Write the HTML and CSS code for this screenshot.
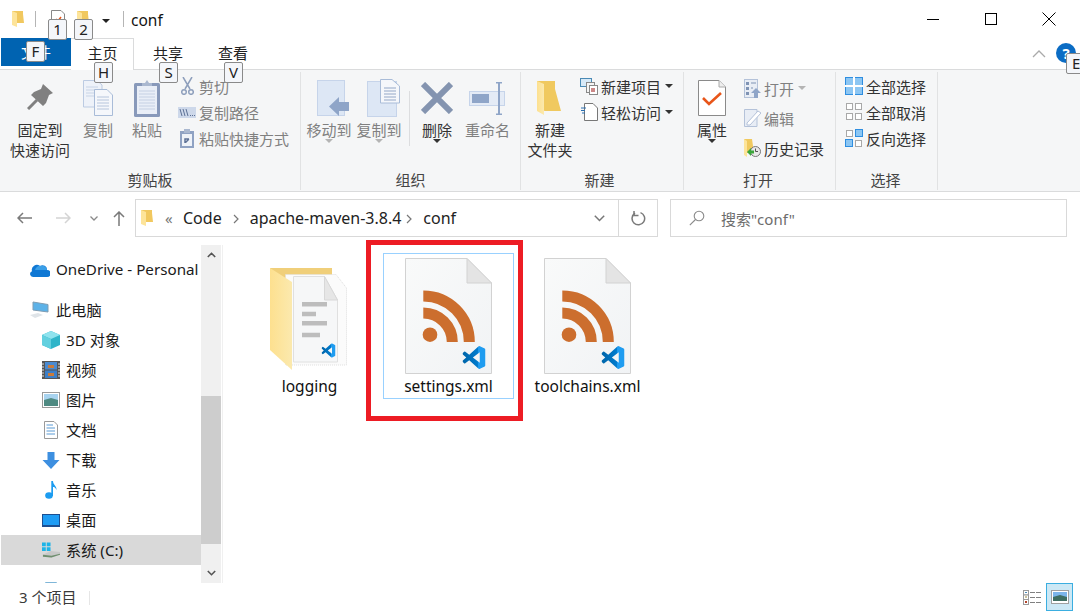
FILE: index.html
```html
<!DOCTYPE html>
<html lang="zh">
<head>
	<meta charset="UTF-8">
	<title>conf</title>
	<link rel="stylesheet" href="styles.css">
</head>
<body>
<svg class="defs" aria-hidden="true">
	<defs>
		<linearGradient id="vsBlue" x1="0" x2="1" y1="0" y2="0">
			<stop offset="0" stop-color="#0065a9"/>
			<stop offset="0.65" stop-color="#007acc"/>
			<stop offset="0.7" stop-color="#1f9cf0"/>
			<stop offset="1" stop-color="#1f9cf0"/>
		</linearGradient>
		<linearGradient id="pageFill" x1="0" x2="1" y1="0" y2="1">
			<stop offset="0" stop-color="#f9fafa"/>
			<stop offset="1" stop-color="#f1f3f5"/>
		</linearGradient>
		<linearGradient id="flapFill" x1="0" x2="1" y1="0" y2="0">
			<stop offset="0" stop-color="#fde08f"/>
			<stop offset="1" stop-color="#fbe9ae"/>
		</linearGradient>
		<symbol id="vscode" viewBox="0 0 24 24">
			<path fill="url(#vsBlue)" d="M23.15 2.587L18.21.21a1.494 1.494 0 0 0-1.705.29l-9.46 8.63-4.12-3.128a.999.999 0 0 0-1.276.057L.327 7.261A1 1 0 0 0 .326 8.74L3.899 12 .326 15.26a1 1 0 0 0 .001 1.479L1.65 17.94a.999.999 0 0 0 1.276.057l4.12-3.128 9.46 8.63a1.492 1.492 0 0 0 1.704.29l4.942-2.377A1.5 1.5 0 0 0 24 20.06V3.939a1.5 1.5 0 0 0-.85-1.352zm-5.146 14.861L10.826 12l7.178-5.448v10.896z"/>
		</symbol>
		<symbol id="xmlDoc" viewBox="0 0 87 116">
			<path d="M.5.500H62L86.500 25V115.500H.5z" fill="url(#pageFill)" stroke="#d2d2d2"/>
			<path d="M62 .5V25H86.500z" fill="#e4e4e4" stroke="#d2d2d2"/>
			<circle cx="25" cy="76.700" r="7.300" fill="#cc6e2e"/>
			<path d="M18.300 55A29 29 0 0 1 47.300 84M18.300 38A46 46 0 0 1 64.300 84" fill="none" stroke="#cc6e2e" stroke-width="11"/>
			<use href="#vscode" x="57.500" y="88" width="23" height="23"/>
		</symbol>
		<symbol id="smallFolder" viewBox="0 0 12 16">
			<path d="M0 0H11V3L12 12H5L0 14z" fill="#f1c85f"/>
			<path d="M0 0L5 2V16L0 14z" fill="#fde49a"/>
		</symbol>
	</defs>
</svg>

<div class="window">
	<div class="titlebar">
		<svg class="qat-folder" width="12" height="16"><use href="#smallFolder"/></svg>
		<span class="qat-sep"></span>
		<svg class="qat-doc" width="14" height="18" viewBox="0 0 14 18"><path d="M.5.500H10L13.500 4V17.500H.5z" fill="#fff" stroke="#888"/><path d="M5 9l2 2 3-4" fill="none" stroke="#e8561a" stroke-width="1.500"/></svg>
		<svg class="qat-folder2" width="12" height="16"><use href="#smallFolder"/></svg>
		<span class="qat-drop"></span>
		<span class="qat-sep qat-sep-2"></span>
		<span class="title-text">conf</span>
		<div class="win-btns">
			<span class="win-btn"><svg width="14" height="14" viewBox="0 0 14 14"><path d="M1 7.500H13" stroke="#000"/></svg></span>
			<span class="win-btn"><svg width="14" height="14" viewBox="0 0 14 14"><rect x="1.500" y="1.500" width="11" height="11" fill="none" stroke="#000"/></svg></span>
			<span class="win-btn"><svg width="14" height="14" viewBox="0 0 14 14"><path d="M.5.500L13.500 13.500M13.500.500L.5 13.500" stroke="#000"/></svg></span>
		</div>
	</div>

	<div class="tabs">
		<span class="tab tab-file">文件</span>
		<span class="tab tab-home">主页</span>
		<span class="tab tab-share">共享</span>
		<span class="tab tab-view">查看</span>
		<div class="tabs-right">
			<svg width="14" height="9" viewBox="0 0 14 9"><path d="M1 8L7 2l6 6" fill="none" stroke="#aaa" stroke-width="1.300"/></svg>
			<span class="help">?</span>
		</div>
	</div>

	<div class="ribbon">
		<section class="group group-clip">
			<div class="group-body">
				<div class="big big-pin">
					<div class="big-icon">
						<svg width="26" height="26" viewBox="0 0 26 26"><path d="M1 25l9-9" stroke="#808080" stroke-width="3"/><path d="M16 0L26 9 22 11 19 19 16 22 4 11 7 8 14 5z" fill="#808080"/></svg>
					</div>
					<span class="big-label">固定到<br>快速访问</span>
				</div>
				<div class="big big-copy dim">
					<div class="big-icon">
						<svg width="30" height="36" viewBox="0 0 30 36"><path d="M.5.500H14L19 5V27H.5z" fill="#eef2f9" stroke="#bccbe2"/><path d="M3 7H15M3 10H15M3 13H15M3 16H15" stroke="#c8d4e6"/><path d="M11.500 9.500H24L29.500 15V35.500H11.500z" fill="#f5f7fb" stroke="#a9bcd8"/><path d="M14 17H26M14 20H26M14 23H26M14 26H26M14 29H26" stroke="#b6c5dc"/></svg>
					</div>
					<span class="big-label">复制</span>
				</div>
				<div class="big big-paste dim">
					<div class="big-icon">
						<svg width="26" height="37" viewBox="0 0 26 37"><rect x="0" y="3" width="26" height="34" rx="1.500" fill="#8899ba"/><rect x="3" y="6" width="20" height="28" fill="#e9eef7"/><path d="M5 11H21M5 14H21M5 17H21M5 20H21M5 23H21M5 26H21M5 29H21" stroke="#c5d0e3"/><path d="M8 6V3H11L13 0 15 3H18V6z" fill="#aab8d0"/></svg>
					</div>
					<span class="big-label">粘贴</span>
				</div>
				<div class="small-col col-clip">
					<div class="small dim">
						<span class="small-icon"><svg width="13" height="18" viewBox="0 0 13 18"><path d="M2 0L9 12M11 0L4 12" stroke="#8e9fbc" stroke-width="1.500"/><circle cx="3" cy="15" r="2.300" fill="none" stroke="#8e9fbc" stroke-width="1.500"/><circle cx="10" cy="15" r="2.300" fill="none" stroke="#8e9fbc" stroke-width="1.500"/></svg></span>
						<span>剪切</span>
					</div>
					<div class="small dim">
						<span class="small-icon"><svg width="18" height="11" viewBox="0 0 18 11"><rect width="18" height="11" fill="#cdd8ea"/><path d="M2 2l2 7M5 2l2 7M8 2l2 7" stroke="#5d7196"/><path d="M12 8.500h1M14 8.500h1M16 8.500h1" stroke="#5d7196"/></svg></span>
						<span>复制路径</span>
					</div>
					<div class="small dim">
						<span class="small-icon"><svg width="14" height="19" viewBox="0 0 14 19"><rect y="2" width="14" height="17" fill="#8fa2c3"/><rect x="2" y="5" width="10" height="12" fill="#eef2f8"/><rect x="4" y="0" width="6" height="4" fill="#aab8d0"/><path d="M5 14V10H9M9 10L5.500 13.500" fill="none" stroke="#5d7196" stroke-width="1.500"/></svg></span>
						<span>粘贴快捷方式</span>
					</div>
				</div>
			</div>
			<div class="group-label">剪贴板</div>
		</section>

		<section class="group group-org">
			<div class="group-body">
				<div class="big big-move dim">
					<div class="big-icon">
						<svg width="32" height="36" viewBox="0 0 32 36"><rect x=".5" y=".5" width="27" height="35" fill="#dde7f5" stroke="#c6d4ea"/><path d="M12 26.500L22 17V22H32V31H22V36z" fill="#8fa5c8"/></svg>
					</div>
					<span class="big-label">移动到</span>
					<span class="drop drop-dim"></span>
				</div>
				<div class="big big-move dim">
					<div class="big-icon">
						<svg width="33" height="38" viewBox="0 0 33 38"><rect x=".5" y="2.500" width="29" height="35" fill="#dde7f5" stroke="#c6d4ea"/><path d="M13.500.5H25L32.500 7V24H13.500z" fill="#f5f7fb" stroke="#a9bcd8"/><path d="M17 9H29M17 12H29M17 15H29M17 18H29M17 21H29" stroke="#93a7c7"/></svg>
					</div>
					<span class="big-label">复制到</span>
					<span class="drop drop-dim"></span>
				</div>
				<span class="vsep"></span>
				<div class="big big-del">
					<div class="big-icon">
						<svg width="32" height="32" viewBox="0 0 32 32"><path d="M2 2L30 30M30 2L2 30" stroke="#8494b0" stroke-width="6"/></svg>
					</div>
					<span class="big-label">删除</span>
					<span class="drop"></span>
				</div>
				<div class="big big-rename dim">
					<div class="big-icon">
						<svg width="37" height="33" viewBox="0 0 37 33"><rect x=".5" y="9.500" width="35" height="14" fill="#e4ebf6" stroke="#c6d4ea"/><rect x="3" y="12" width="17" height="9" fill="#8fa5c8"/><path d="M27 .5H33M30 .5V32.500M27 32.500H33" fill="none" stroke="#8fa5c8" stroke-width="2"/></svg>
					</div>
					<span class="big-label">重命名</span>
				</div>
			</div>
			<div class="group-label">组织</div>
		</section>

		<section class="group group-new">
			<div class="group-body">
				<div class="big big-newdir">
					<div class="big-icon">
						<svg width="24" height="34" viewBox="0 0 24 34"><path d="M0 0H18V8L24 30H8L0 28z" fill="#f0c95f"/><path d="M0 0L7 3V34L0 30z" fill="url(#flapFill)"/></svg>
					</div>
					<span class="big-label">新建<br>文件夹</span>
				</div>
				<div class="small-col col-new">
					<div class="small small-drop">
						<span class="small-icon"><svg width="18" height="17" viewBox="0 0 18 17"><rect x=".5" y=".5" width="11" height="8" fill="#d7e9f7" stroke="#4a8ab5"/><rect x="6.500" y="4.500" width="8" height="10" fill="#f4f4f4" stroke="#888"/><rect x="9.500" y="7.500" width="8" height="9" fill="#fff" stroke="#888"/><rect x="11" y="10" width="4" height="4" fill="#c88"/></svg></span>
						<span>新建项目</span>
						<span class="drop drop-side"></span>
					</div>
					<div class="small small-drop">
						<span class="small-icon"><svg width="17" height="18" viewBox="0 0 17 18"><path d="M3.500.5H12L16.500 5V17.500H3.500z" fill="#fff" stroke="#777"/><path d="M0 5H5M0 7.500H4M1 10H4" stroke="#2a6fb0"/></svg></span>
						<span>轻松访问</span>
						<span class="drop drop-side"></span>
					</div>
				</div>
			</div>
			<div class="group-label">新建</div>
		</section>

		<section class="group group-open">
			<div class="group-body">
				<div class="big big-prop">
					<div class="big-icon">
						<svg width="28" height="36" viewBox="0 0 28 36"><path d="M.5.500H21L27.500 7V35.500H.5z" fill="#fff" stroke="#8a8a8a"/><path d="M21 .5V7H27.500" fill="#eee" stroke="#aaa"/><path d="M5 18l6 6 12-11" fill="none" stroke="#e8561a" stroke-width="2.600"/></svg>
					</div>
					<span class="big-label">属性</span>
					<span class="drop"></span>
				</div>
				<div class="small-col col-open">
					<div class="small small-tall dim">
						<span class="small-icon"><svg width="17" height="19" viewBox="0 0 17 19"><rect x=".5" y=".5" width="13" height="18" fill="#e8edf5" stroke="#b4c2d9"/><path d="M2 3h3v3H2zM2 8h3v3H2zM2 13h3v3H2z" fill="#7f93b4"/><path d="M7 4h5M7 9h2" stroke="#7f93b4"/><path d="M12 9l5 5h-3v5h-4v-5H7z" fill="#8fa5c8"/></svg></span>
						<span>打开</span>
						<span class="drop drop-dim drop-open"></span>
					</div>
					<div class="small small-tall dim">
						<span class="small-icon"><svg width="17" height="18" viewBox="0 0 17 18"><path d="M.5.500H13V17.500H.5z" fill="#e8edf5" stroke="#b4c2d9"/><path d="M3 14L14 2l3 2L6 16H3z" fill="#fff" stroke="#b4c2d9"/></svg></span>
						<span>编辑</span>
					</div>
					<div class="small small-tall">
						<span class="small-icon"><svg width="17" height="18" viewBox="0 0 17 18"><path d="M0 0H8L10 14H3L0 16z" fill="#f0c95f"/><path d="M0 0L3 2V18L0 16z" fill="#fde49a"/><circle cx="11.500" cy="12.500" r="5" fill="#e8e8e8" stroke="#777"/><path d="M11.500 9.500V12.500H14" fill="none" stroke="#555"/><path d="M3 13L7 9V11.500H10V14.500H7V17z" fill="#3aa53a"/></svg></span>
						<span>历史记录</span>
					</div>
				</div>
			</div>
			<div class="group-label">打开</div>
		</section>

		<section class="group group-sel">
			<div class="group-body">
				<div class="small-col col-sel">
					<div class="small">
						<span class="small-icon"><svg width="18" height="18" viewBox="0 0 18 18"><rect x=".5" y=".5" width="17" height="17" fill="#8cc6f3" stroke="#2f8ee0"/><path d="M9 0V18M0 9H18" stroke="#fff" stroke-width="2"/></svg></span>
						<span>全部选择</span>
					</div>
					<div class="small">
						<span class="small-icon"><svg width="18" height="18" viewBox="0 0 18 18"><g fill="#fff" stroke="#a8a8a8"><rect x="1.500" y=".5" width="6" height="6"/><rect x="10.500" y=".5" width="6" height="6"/><rect x="1.500" y="10.500" width="6" height="6"/><rect x="10.500" y="10.500" width="6" height="6"/></g></svg></span>
						<span>全部取消</span>
					</div>
					<div class="small">
						<span class="small-icon"><svg width="18" height="18" viewBox="0 0 18 18"><rect x="1.500" y="1.500" width="6" height="6" fill="#fff" stroke="#a8a8a8"/><rect x="10.500" y=".5" width="7" height="7" fill="#8cc6f3" stroke="#2f8ee0"/><rect x=".5" y="10.500" width="7" height="7" fill="#8cc6f3" stroke="#2f8ee0"/><rect x="10.500" y="11.500" width="6" height="6" fill="#fff" stroke="#a8a8a8"/></svg></span>
						<span>反向选择</span>
					</div>
				</div>
			</div>
			<div class="group-label">选择</div>
		</section>
	</div>

	<div class="addressrow">
		<svg class="nav-back" width="15" height="12" viewBox="0 0 15 12"><path d="M15 6H1M6 1L1 6l5 5" fill="none" stroke="#7a7a7a" stroke-width="1.500"/></svg>
		<svg class="nav-fwd" width="15" height="12" viewBox="0 0 15 12"><path d="M0 6H14M9 1l5 5-5 5" fill="none" stroke="#d4d4d4" stroke-width="1.500"/></svg>
		<svg class="nav-down" width="8" height="5" viewBox="0 0 8 5"><path d="M.5.500L4 4 7.500.5" fill="none" stroke="#8a8a8a" stroke-width="1.300"/></svg>
		<svg class="nav-up" width="12" height="15" viewBox="0 0 12 15"><path d="M6 15V1M1 6l5-5 5 5" fill="none" stroke="#7a7a7a" stroke-width="1.500"/></svg>
		<div class="addrbox">
			<svg class="crumb-folder" width="12" height="16"><use href="#smallFolder"/></svg>
			<span class="crumb-more">«</span>
			<span class="crumb">Code</span>
			<svg class="crumb-arrow" width="6" height="10" viewBox="0 0 6 10"><path d="M1 1l4 4-4 4" fill="none" stroke="#777" stroke-width="1.200"/></svg>
			<span class="crumb">apache-maven-3.8.4</span>
			<svg class="crumb-arrow crumb-arrow-last" width="6" height="10" viewBox="0 0 6 10"><path d="M1 1l4 4-4 4" fill="none" stroke="#777" stroke-width="1.200"/></svg>
			<span class="crumb">conf</span>
			<svg class="addr-drop" width="11" height="7" viewBox="0 0 11 7"><path d="M.8.800L5.500 5.500 10.200.8" fill="none" stroke="#777" stroke-width="1.500"/></svg>
			<span class="addr-refresh">
				<svg width="15" height="15" viewBox="0 0 15 15"><path d="M9.500 1.600A6.300 6.300 0 1 1 4 2.200" fill="none" stroke="#7a7a7a" stroke-width="1.500"/><path d="M3 0V4.500H7.500" fill="none" stroke="#7a7a7a" stroke-width="1.500"/></svg>
			</span>
		</div>
		<div class="searchbox">
			<svg width="16" height="16" viewBox="0 0 16 16"><circle cx="10" cy="6" r="4.800" fill="none" stroke="#8a8a8a" stroke-width="1.100"/><path d="M6.500 9.500L.8 15.200" stroke="#8a8a8a" stroke-width="1.100"/></svg>
			<span class="search-text">搜索"conf"</span>
		</div>
	</div>

	<div class="main">
		<nav class="nav">
			<div class="nav-list">
				<div class="row row-top">
					<svg width="20" height="14" viewBox="0 0 20 14"><path d="M3 14a3 3 0 0 1-1-5.800A5 5 0 0 1 10 3a4.500 4.500 0 0 1 7 4 3.500 3.500 0 0 1 0 7z" fill="#0f78d4"/><path d="M5 7a5 5 0 0 1 6-4 4.500 4.500 0 0 1 6 4z" fill="#3a9fe8"/></svg>
					<span>OneDrive - Personal</span>
				</div>
				<div class="row row-top row-gap">
					<svg width="20" height="18" viewBox="0 0 20 18"><path d="M3 1l15 2.500V11L3 9z" fill="#5cb2e8" stroke="#7f9db3"/><path d="M0 14l8-2 5 2-8 3z" fill="#dfe4e8"/></svg>
					<span>此电脑</span>
				</div>
				<div class="row">
					<svg width="18" height="18" viewBox="0 0 18 18"><path d="M9 0l9 4v10l-9 4-9-4V4z" fill="#2fb5c9"/><path d="M9 0l9 4-9 4-9-4z" fill="#8fe3ee"/><path d="M0 4l9 4v10l-9-4z" fill="#62d0df"/></svg>
					<span>3D 对象</span>
				</div>
				<div class="row">
					<svg width="18" height="18" viewBox="0 0 18 18"><rect width="18" height="18" fill="#555"/><rect x="3" y="1" width="12" height="7.500" fill="#4a8ad0"/><rect x="3" y="9.500" width="12" height="7.500" fill="#3c7fc8"/><rect x="6" y="4" width="6" height="3" fill="#c97b3a"/><rect x="6" y="12" width="6" height="3" fill="#c97b3a"/><path d="M1 2v14M17 2v14" stroke="#ddd" stroke-width="1" stroke-dasharray="2 1"/></svg>
					<span>视频</span>
				</div>
				<div class="row">
					<svg width="18" height="16" viewBox="0 0 18 16"><rect x=".5" y=".5" width="17" height="15" fill="#fff" stroke="#9a9a9a"/><rect x="2" y="2" width="14" height="6" fill="#a8d3ef"/><path d="M2 8l7-2 7 2v6H2z" fill="#4f8a82"/></svg>
					<span>图片</span>
				</div>
				<div class="row">
					<svg width="14" height="18" viewBox="0 0 14 18"><path d="M.5.500H10L13.500 4V17.500H.5z" fill="#fff" stroke="#9a9a9a"/><path d="M2.500 4H9M2.500 7H11M2.500 10H11M2.500 13H11" stroke="#5b9bd5"/></svg>
					<span>文档</span>
				</div>
				<div class="row">
					<svg width="17" height="17" viewBox="0 0 17 17"><path d="M5 0H12V8H17L8.500 17 0 8H5z" fill="#3d8fe0"/></svg>
					<span>下载</span>
				</div>
				<div class="row">
					<svg width="12" height="18" viewBox="0 0 12 18"><ellipse cx="4" cy="14.500" rx="3.800" ry="3.200" fill="#1c9cf0"/><path d="M6.300 0H8c0 4 4 5 3.500 9-1-2.500-2.500-3-3.500-3V15H6.300z" fill="#1c9cf0"/></svg>
					<span>音乐</span>
				</div>
				<div class="row">
					<svg width="18" height="13" viewBox="0 0 18 13"><rect width="18" height="13" fill="#1d4f91"/><rect x="1" y="1" width="16" height="10" fill="#1e9cf4"/></svg>
					<span>桌面</span>
				</div>
				<div class="row row-sel">
					<svg width="19" height="16" viewBox="0 0 19 16"><path d="M0 0H4V4H0zM5 0H9V4H5zM0 5H4V9H0zM5 5H9V9H5z" fill="#1cb4e8"/><path d="M1 13l8-4 10 1v2l-9 4-9-1z" fill="#c8c8c8"/><path d="M1 13l9 1 9-2v1l-9 3-9-1z" fill="#6f8f6f"/></svg>
					<span>系统 (C:)</span>
				</div>
				<div class="row row-gap">
					<svg width="20" height="18" viewBox="0 0 20 18"><path d="M4 0h12l4 6H0z" fill="#7fb6d8"/></svg>
				</div>
			</div>
			<div class="scrollbar">
				<span class="sb-btn"><svg width="9" height="6" viewBox="0 0 9 6"><path d="M.8 5L4.500 1.300 8.200 5" fill="none" stroke="#555" stroke-width="1.600"/></svg></span>
				<span class="sb-gap"></span>
				<span class="sb-thumb"></span>
				<span class="sb-rest"></span>
				<span class="sb-btn"><svg width="9" height="6" viewBox="0 0 9 6"><path d="M.8 1L4.500 4.700 8.200 1" fill="none" stroke="#555" stroke-width="1.600"/></svg></span>
			</div>
		</nav>

		<div class="files">
			<div class="item">
				<svg class="item-icon" viewBox="0 0 87 116">
					<path d="M4 10H66V100H26z" fill="#f0cf7a"/>
					<path d="M19.500 16.500H70L80.500 30V107H19.500z" fill="#fbfbfb" stroke="#dedede" stroke-dasharray="1 1"/>
					<path d="M27.500 18.500H58.500L71.500 42V104H27.500z" fill="#f6f7f8" stroke="#e0e0e0"/>
					<path d="M58.500 18.500V42H71.500z" fill="#e6e6e6" stroke="#d8d8d8"/>
					<path d="M36 46.300H61M36 56H50M36 65.300H61M36 77H54" stroke="#bdbdbd" stroke-width="4.500"/>
					<use href="#vscode" x="55.500" y="85" width="14" height="15"/>
					<path d="M4 10L26 24V112L4 92z" fill="url(#flapFill)"/>
				</svg>
				<span class="item-name">logging</span>
			</div>
			<div class="item item-sel">
				<svg class="item-icon"><use href="#xmlDoc"/></svg>
				<span class="item-name">settings.xml</span>
			</div>
			<div class="item">
				<svg class="item-icon"><use href="#xmlDoc"/></svg>
				<span class="item-name">toolchains.xml</span>
			</div>
			<div class="red-mark"></div>
		</div>
	</div>

	<div class="statusbar">
		<span class="status-count">3 个项目</span>
		<span class="status-sep"></span>
		<div class="view-btns">
			<svg width="18" height="15" viewBox="0 0 18 15"><g fill="#fff" stroke="#9a9a9a"><rect x=".5" y=".5" width="5" height="4.500"/><rect x=".5" y="5" width="5" height="4.500"/><rect x=".5" y="9.500" width="5" height="5"/></g><path d="M2 2h2v1H2z" fill="#4a8ab5"/><path d="M2 6.500h2v1H2z" fill="#9a8a3a"/><path d="M2 11h2v2H2z" fill="#b5432a"/><path d="M7 2.500h5M13 2.500h5M7 7.500h5M13 7.500h5M7 12.500h5M13 12.500h5" stroke="#808080"/></svg>
			<span class="view-thumb">
				<svg width="18" height="14" viewBox="0 0 18 14"><rect x=".5" y=".5" width="17" height="13" fill="#fff" stroke="#a0a0a0"/><rect x="2" y="2" width="14" height="5" fill="#7cb5ea"/><path d="M2 7l7-2 7 2v4H2z" fill="#3f6f62"/></svg>
			</span>
		</div>
	</div>

	<span class="keytip kt-1">1</span>
	<span class="keytip kt-2">2</span>
	<span class="keytip kt-f">F</span>
	<span class="keytip kt-h">H</span>
	<span class="keytip kt-s">S</span>
	<span class="keytip kt-v">V</span>
	<span class="keytip kt-e">E</span>
</div>
</body>
</html>
```

FILE: styles.css
```css
*{
	margin: 0;
	padding: 0;
	box-sizing: border-box;
}
html,body{
	height: 100%;
	overflow: hidden;
	background-color: #fff;
}
body{
	font-family: "Noto Sans", "Noto Sans CJK SC", sans-serif;
	font-size: 15px;
	color: #1a1a1a;
}
svg{
	display: block;
	flex: none;
}
.defs{
	position: absolute;
	width: 0;
	height: 0;
}
.window{
	position: relative;
	width: 1080px;
	height: 613px;
	display: flex;
	flex-direction: column;
}

/* title bar */
.titlebar{
	height: 38px;
	display: flex;
	align-items: center;
	padding-left: 12px;
}
.qat-sep{
	width: 1px;
	height: 16px;
	margin-left: 11px;
	background-color: #b5b5b5;
}
.qat-doc{
	margin-left: 15px;
}
.qat-folder2{
	margin-left: 12px;
}
.qat-drop{
	width: 0;
	height: 0;
	margin-left: 13px;
	margin-top: 3px;
	border-left: 4px solid transparent;
	border-right: 4px solid transparent;
	border-top: 4px solid #222;
}
.qat-sep-2{
	margin-left: 13px;
}
.title-text{
	margin-left: 7px;
	padding-top: 1px;
	font-size: 15.5px;
	color: #111;
}
.win-btns{
	display: flex;
	margin-left: auto;
	margin-right: 2px;
}
.win-btn{
	width: 58px;
	height: 38px;
	display: flex;
	align-items: center;
	justify-content: center;
}

/* tabs */
.tabs{
	height: 32px;
	display: flex;
	align-items: flex-start;
	border-bottom: 1px solid #dadbdc;
}
.tab{
	height: 32px;
	line-height: 30px;
	text-align: center;
	color: #222;
}
.tab-file{
	width: 70px;
	height: 28px;
	line-height: 28px;
	margin-left: 1px;
	background-color: #0063b1;
	color: #fff;
}
.tab-home{
	width: 63px;
	padding-left: 1px;
	background-color: #fff;
	border-top: 1px solid #dadbdc;
	border-right: 1px solid #dadbdc;
	line-height: 29px;
}
.tab-share{
	width: 68px;
}
.tab-view{
	width: 62px;
}
.tabs-right{
	display: flex;
	align-items: center;
	margin-left: auto;
	height: 30px;
	margin-right: 4px;
}
.help{
	width: 20px;
	height: 20px;
	margin-left: 10px;
	border-radius: 50%;
	background-color: #0b6cc4;
	color: #fff;
	font-size: 15px;
	font-weight: 700;
	line-height: 20px;
	text-align: center;
}

/* ribbon */
.ribbon{
	height: 122px;
	display: flex;
	padding: 2px 0 1px;
	background-color: #f5f6f7;
	border-bottom: 1px solid #dadbdc;
	color: #333;
}
.group{
	display: flex;
	flex-direction: column;
	border-right: 1px solid #e1e2e3;
}
.group-clip{
	width: 301px;
}
.group-org{
	width: 220px;
}
.group-new{
	width: 163px;
}
.group-open{
	width: 152px;
}
.group-sel{
	width: 102px;
}
.group-body{
	flex: 1;
	display: flex;
	padding-top: 3px;
}
.group-label{
	height: 20px;
	line-height: 20px;
	text-align: center;
	color: #444;
}
.group-clip .group-body{
	padding-left: 10px;
}
.group-org .group-body{
	padding-left: 3px;
}
.group-new .group-body{
	padding-left: 4px;
}
.group-open .group-body{
	padding-left: 4px;
}
.group-new .group-label{
	padding-right: 5px;
}
.group-open .group-label{
	padding-right: 3px;
}
.group-sel .group-label{
	padding-right: 2px;
}
.big{
	display: flex;
	flex-direction: column;
	align-items: center;
}
.big-icon{
	height: 44px;
	margin-top: 1px;
	display: flex;
	align-items: center;
	justify-content: center;
}
.big-label{
	line-height: 20px;
	text-align: center;
	white-space: nowrap;
}
.big-pin{
	width: 60px;
}
.big-pin svg{
	margin-bottom: 2px;
}
.big-copy{
	width: 56px;
}
.big-paste{
	width: 42px;
}
.big-move{
	width: 50px;
}
.big-move svg{
	margin-left: 8px;
}
.big-del{
	width: 54px;
}
.big-rename{
	width: 47px;
}
.big-newdir{
	width: 50px;
}
.big-newdir svg{
	margin-right: 2px;
}
.big-prop{
	width: 48px;
}
.dim{
	color: #808080;
}
.vsep{
	width: 1px;
	height: 55px;
	margin: 16px 0 0 5px;
	background-color: #dcdddf;
}
.drop{
	width: 0;
	height: 0;
	margin-top: -1px;
	border-left: 4px solid transparent;
	border-right: 4px solid transparent;
	border-top: 4px solid #333;
}
.drop-dim{
	border-top-color: #b4b4b4;
}
.small-col{
	display: flex;
	flex-direction: column;
	margin-top: -2px;
}
.col-clip{
	margin-left: 7px;
}
.col-new{
	margin-left: 2px;
}
.col-open{
	margin-left: 4px;
}
.col-sel{
	margin-left: 6px;
}
.small{
	height: 26px;
	display: flex;
	align-items: center;
	white-space: nowrap;
}
.small-tall{
	height: 30px;
}
.small-icon{
	width: 24px;
	display: flex;
	justify-content: center;
}
.drop-side{
	margin: 0 0 0 4px;
}
.drop-open{
	margin-left: 4px;
}

/* address row */
.addressrow{
	height: 53px;
	display: flex;
	align-items: center;
	padding: 7px 13px 8px 17px;
	background-color: #fff;
}
.nav-fwd{
	margin-left: 24px;
}
.nav-down{
	margin-left: 19px;
}
.nav-up{
	margin-left: 15px;
}
.addrbox{
	width: 523px;
	height: 38px;
	margin-left: 10px;
	display: flex;
	align-items: center;
	padding-left: 5px;
	border: 1px solid #d9d9d9;
}
.crumb-more{
	margin-left: 12px;
	width: 18px;
	color: #777;
	font-size: 15px;
}
.crumb{
	font-size: 16px;
	color: #222;
}
.crumb-arrow{
	margin: 1px 11px 0 11px;
}
.crumb-arrow-last{
	margin-left: 5px;
}
.addr-drop{
	margin-left: auto;
	margin-right: 13px;
}
.addr-refresh{
	width: 39px;
	height: 100%;
	display: flex;
	align-items: center;
	justify-content: center;
	border-left: 1px solid #d9d9d9;
}
.searchbox{
	flex: 1;
	height: 38px;
	margin-left: 12px;
	display: flex;
	align-items: center;
	padding-left: 18px;
	border: 1px solid #d9d9d9;
}
.search-text{
	margin-left: 16px;
	color: #6d6d6d;
}

/* sidebar */
.main{
	flex: 1;
	display: flex;
	min-height: 0;
}
.nav{
	width: 223px;
	display: flex;
	border-right: 1px solid #f0f0f0;
}
.nav-list{
	width: 201px;
	padding: 10px 0 0 1px;
	overflow: hidden;
	font-size: 15.2px;
}
.row{
	height: 30px;
	display: flex;
	align-items: center;
	gap: 6px;
	white-space: nowrap;
}
.row span{
	margin-bottom: 2px;
}
.row svg{
	margin-left: 41px;
	width: 18px;
}
.row-top svg{
	margin-left: 29px;
	width: 20px;
}
.row-gap{
	margin-top: 10px;
}
.row-sel{
	background-color: #d9d9d9;
}
.scrollbar{
	width: 20px;
	display: flex;
	flex-direction: column;
	background-color: #f0f0f0;
}
.sb-btn{
	height: 20px;
	flex: none;
	display: flex;
	align-items: center;
	justify-content: center;
}
.sb-gap{
	height: 131px;
	flex: none;
}
.sb-thumb{
	height: 148px;
	flex: none;
	background-color: #cdcdcd;
}
.sb-rest{
	flex: 1;
}

/* files */
.files{
	position: relative;
	flex: 1;
	display: flex;
	align-items: flex-start;
	gap: 8px;
	padding: 8px 0 0 21px;
}
.item{
	width: 131px;
	height: 146px;
	display: flex;
	flex-direction: column;
	align-items: center;
	padding-top: 4px;
	border: 1px solid transparent;
}
.item-sel{
	border-color: #99d1ff;
}
.item-icon{
	width: 87px;
	height: 116px;
}
.item-name{
	margin-top: 2px;
	line-height: 20px;
	font-size: 15.5px;
	white-space: nowrap;
	color: #111;
}
.red-mark{
	position: absolute;
	left: 143px;
	top: -5px;
	width: 157px;
	height: 181px;
	border: 5px solid #ed1c24;
}

/* status bar */
.statusbar{
	height: 30px;
	display: flex;
	align-items: center;
	padding-left: 19px;
	color: #3a3a3a;
}
.status-count{
	margin-bottom: 4px;
}
.status-sep{
	width: 1px;
	height: 14px;
	margin-left: 13px;
	background-color: #e6e6e6;
}
.view-btns{
	display: flex;
	align-items: center;
	margin-left: auto;
	margin-right: 7px;
	margin-bottom: 2px;
	gap: 5px;
}
.view-thumb{
	width: 27px;
	height: 28px;
	display: flex;
	align-items: center;
	justify-content: center;
	background-color: #cce8f5;
	border: 1px solid #3baee0;
}

/* key tips, they sit over the ribbon */
.keytip{
	position: absolute;
	width: 19px;
	height: 21px;
	line-height: 19px;
	text-align: center;
	font-size: 15px;
	color: #222;
	background-color: #f4f6fa;
	border: 1px solid #8a8a8a;
	border-radius: 2px;
}
.kt-1{
	left: 48px;
	top: 19px;
}
.kt-2{
	left: 74px;
	top: 19px;
}
.kt-f{
	left: 26px;
	top: 41px;
}
.kt-h{
	left: 94px;
	top: 62px;
}
.kt-s{
	left: 159px;
	top: 62px;
}
.kt-v{
	left: 224px;
	top: 62px;
}
.kt-e{
	left: 1066px;
	top: 53px;
	text-align: left;
	padding-left: 5px;
}
```
